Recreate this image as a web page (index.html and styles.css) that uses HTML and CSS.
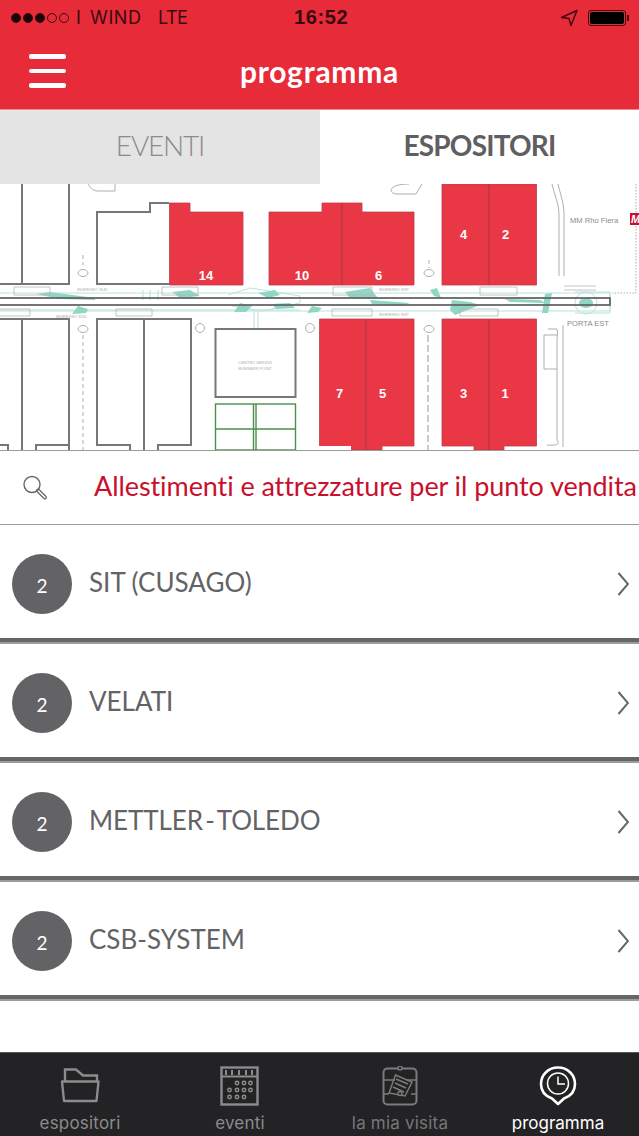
FILE: index.html
```html
<!doctype html>
<html>
<head>
  <meta charset="utf-8">
  <title>programma</title>
  <link rel="stylesheet" href="styles.css">
</head>
<body>
  <header class="top">
    <div class="status">
      <div class="signal">
        <span class="dot on"></span><span class="dot on"></span><span class="dot on"></span><span class="dot"></span><span class="dot"></span>
      </div>
      <span class="carrier">I WIND</span>
      <span class="net">LTE</span>
      <span class="time">16:52</span>
      <svg class="arrow" width="18" height="18" viewBox="0 0 18 18"><path d="M17 1.5 1.5 8.5 9 9.5 11 16.5Z" fill="none" stroke="#3a0a10" stroke-width="1.4" stroke-linejoin="round"/></svg>
      <div class="battery"><div class="battery-fill"></div></div>
      <div class="battery-tip"></div>
    </div>
    <div class="nav">
      <div class="burger"><span></span><span></span><span></span></div>
      <h1 class="title">programma</h1>
    </div>
  </header>

  <div class="tabs">
    <div class="tab">EVENTI</div>
    <div class="tab active">ESPOSITORI</div>
  </div>

  <svg class="map" width="639" height="266" viewBox="0 184 639 266">
    <!-- teal paths along the road -->
    <g fill="none" stroke="#b9e3d9" stroke-width="1">
      <path d="M0 293H610V311H0"/>
      <path d="M0 310H300"/>
      <path d="M143 290V300M150 290V300M158 290V300M228 295 250 288 300 296 300 303 262 311 232 306"/>
      <path d="M575 292H610V313H575"/>
      <path d="M254 311V328M258 311V328"/>
    </g>
    <g fill="#8fd6c5">
      <path d="M36 294 50 292 95 298 95 300 60 299Z"/>
      <path d="M72 314 78 306 88 309 86 313Z"/>
      <path d="M172 292 190 290 200 296 180 298Z"/>
      <path d="M258 293 275 290 280 295 268 298Z"/>
      <path d="M272 304 290 303 295 308 276 309Z"/>
      <path d="M234 312 240 303 252 306 246 312Z"/>
      <path d="M307 313 312 306 322 308 318 312Z"/>
      <path d="M345 292 370 288 378 298 350 298Z"/>
      <path d="M370 300 410 303 400 306 372 304Z"/>
      <path d="M430 290 437 288 441 298 434 296Z"/>
      <path d="M452 300 470 302 480 305 455 315 450 310Z"/>
      <path d="M505 299 540 300 546 303 510 302Z"/>
      <path d="M545 294 552 293 548 313 542 313Z"/>
      <ellipse cx="586" cy="303" rx="7" ry="5"/>
    </g>
    <circle cx="586" cy="303" r="11" fill="none" stroke="#b9e3d9"/>

    <!-- road -->
    <rect x="-4" y="298" width="614" height="7" fill="none" stroke="#666" stroke-width="1.8"/>

    <!-- entrances -->
    <g fill="none" stroke="#b5b5b5" stroke-width="0.8">
      <path d="M14 287H50V295H14ZM162 287H198V295H162ZM333 287H372V295H333ZM480 287H517V295H480Z"/>
      <path d="M-4 309H30V316H-4ZM116 309H152V316H116ZM332 309H372V316H332ZM460 309H498V316H460Z"/>
      <path d="M564 286H596M564 290H596"/>
    </g>

    <!-- grey halls -->
    <g fill="#fff" stroke="#777" stroke-width="2">
      <path d="M-2 284H69V184M22 184V284"/>
      <path d="M169 284H97V212H150V203H169"/>
      <path d="M-2 319H69V450M22 319V450M-2 445H8V450M36 450V445H69"/>
      <path d="M130 450V445H97V319H191V445H158V450M144 319V450"/>
      <rect x="215.500" y="329" width="80" height="68"/>
    </g>
    <g fill="none" stroke="#4b8f4b" stroke-width="1.400">
      <rect x="215.500" y="404" width="80" height="46"/>
      <path d="M253.500 404V450M256 404V450M215.500 429H295.500"/>
    </g>

    <!-- red halls -->
    <g fill="#ea3745" stroke="#b8404b" stroke-width="0.800">
      <path d="M169.500 285V203H190V212H243V285Z"/>
      <path d="M269 285V212H322V203H362V212H414V285Z"/>
      <rect x="442" y="184" width="94.500" height="101"/>
      <path d="M319.500 450V319H414V446H382V450Z" />
      <path d="M442 446V319H536.500V446H504V450H474V446Z"/>
    </g>
    <path d="M319 446H351V450.500H319Z" fill="#fff"/>
    <path d="M342 203V285M489 184V285M366 319V450M489 319V450" stroke="#a63a45" fill="none"/>

    <g class="hall-nums" text-anchor="middle">
      <text x="206" y="280">14</text>
      <text x="302" y="280">10</text>
      <text x="378.500" y="280">6</text>
      <text x="463.500" y="239">4</text>
      <text x="505.500" y="239">2</text>
      <text x="339.500" y="398">7</text>
      <text x="382.500" y="398">5</text>
      <text x="463.500" y="398">3</text>
      <text x="505" y="398">1</text>
    </g>

    <!-- other bits of the plan -->
    <g fill="none" stroke="#a5a5a5" stroke-width="0.900">
      <path d="M409 184C388 184 388 193 396 194H416L422 184"/>
      <path d="M88 184C91 189 94 191 98 191H115V184"/>
      <path d="M552 184C556 200 559 205 559 215V276M558 184C562 200 564 205 564 215V276"/>
      <path d="M636 184V293H612" stroke-dasharray="1.500 1.500"/>
      <path d="M548 329H557M557 329C558 334 557 336 557 340V440C560 444 557 446 547 445M557 335H544V369H557M563 325V447"/>
      <path d="M429 260V268M83 255V265M83 335V450" stroke-dasharray="4 3"/>
      <path d="M428 335V450" stroke-dasharray="7 3" stroke="#888"/>
      <ellipse cx="429" cy="273" rx="5" ry="3.500"/>
      <ellipse cx="83" cy="273" rx="5" ry="3.500"/>
      <ellipse cx="83" cy="329" rx="5" ry="3.500"/>
      <ellipse cx="429" cy="329" rx="5" ry="3.500"/>
      <circle cx="200" cy="328" r="4.500"/>
      <circle cx="310" cy="328" r="4.500"/>
    </g>
    <g class="map-small">
      <text x="570" y="223" class="map-label">MM Rho Fiera</text>
      <text x="567" y="326" class="map-label">PORTA EST</text>
      <text x="255" y="364" class="map-tiny" text-anchor="middle">CENTRO SERVIZI</text>
      <text x="255" y="370" class="map-tiny" text-anchor="middle">BUSINESS POINT</text>
      <text x="77" y="291" class="map-tiny">INGRESSO SUD</text>
      <text x="56" y="318" class="map-tiny">INGRESSO SUD</text>
      <text x="379" y="291" class="map-tiny">INGRESSO EST</text>
      <text x="379" y="316" class="map-tiny">INGRESSO EST</text>
    </g>
    <rect x="630" y="213" width="12" height="12" fill="#c8102e"/>
    <text x="631" y="223" class="map-m">M</text>
  </svg>

  <div class="search">
    <svg class="search-icon" width="28" height="28" viewBox="0 0 28 28">
      <circle cx="11" cy="10.500" r="8" fill="none" stroke="#666" stroke-width="1.400"/>
      <path d="M17 16.500 24 23.500" stroke="#666" stroke-width="4" stroke-linecap="round"/>
      <path d="M17.500 17 24 23.500" stroke="#fff" stroke-width="1.500" stroke-linecap="round"/>
    </svg>
    <span class="search-text">Allestimenti e attrezzature per il punto vendita</span>
  </div>

  <div class="list">
    <div class="row">
      <span class="badge">2</span>
      <span class="name">SIT (CUSAGO)</span>
      <svg class="chevron" width="14" height="26" viewBox="0 0 14 26"><path d="M3.500 2 13 13 3.500 24" fill="none" stroke="#666" stroke-width="2"/></svg>
    </div>
    <div class="row">
      <span class="badge">2</span>
      <span class="name">VELATI</span>
      <svg class="chevron" width="14" height="26" viewBox="0 0 14 26"><path d="M3.500 2 13 13 3.500 24" fill="none" stroke="#666" stroke-width="2"/></svg>
    </div>
    <div class="row">
      <span class="badge">2</span>
      <span class="name tight">METTLER - TOLEDO</span>
      <svg class="chevron" width="14" height="26" viewBox="0 0 14 26"><path d="M3.500 2 13 13 3.500 24" fill="none" stroke="#666" stroke-width="2"/></svg>
    </div>
    <div class="row">
      <span class="badge">2</span>
      <span class="name">CSB-SYSTEM</span>
      <svg class="chevron" width="14" height="26" viewBox="0 0 14 26"><path d="M3.500 2 13 13 3.500 24" fill="none" stroke="#666" stroke-width="2"/></svg>
    </div>
  </div>

  <footer class="bottom">
    <div class="item">
      <svg width="40" height="40" viewBox="0 0 40 40">
        <path d="M5 15V3.500H16L23 9.500H37V15" fill="none" stroke="#8c8c8c" stroke-width="2.400"/>
        <path d="M2 15.500H38.500L36.500 35H4Z" fill="none" stroke="#8c8c8c" stroke-width="2.400" stroke-linejoin="round"/>
      </svg>
      <span>espositori</span>
    </div>
    <div class="item">
      <svg width="40" height="40" viewBox="0 0 40 40">
        <rect x="1.500" y="1.500" width="36" height="37" fill="none" stroke="#8c8c8c" stroke-width="2.400"/>
        <path d="M1.500 10.500H37.500" stroke="#8c8c8c" stroke-width="2"/>
        <path d="M6 4V9M12 4V9M19 4V9M26 4V9M32 4V9" stroke="#8c8c8c" stroke-width="2"/>
        <g fill="none" stroke="#8c8c8c" stroke-width="1.500">
          <circle cx="17" cy="17" r="1.700"/><circle cx="24" cy="17" r="1.700"/><circle cx="30.500" cy="17" r="1.700"/>
          <circle cx="9.500" cy="24" r="1.700"/><circle cx="17" cy="24" r="1.700"/><circle cx="24" cy="24" r="1.700"/><circle cx="30.500" cy="24" r="1.700"/>
          <circle cx="9.500" cy="31" r="1.700"/><circle cx="17" cy="31" r="1.700"/><circle cx="24" cy="31" r="1.700"/>
        </g>
      </svg>
      <span>eventi</span>
    </div>
    <div class="item dim">
      <svg width="40" height="40" viewBox="0 0 40 40">
        <rect x="3.500" y="2.500" width="33" height="36" rx="4" fill="none" stroke="#7c7c7c" stroke-width="2"/>
        <circle cx="20" cy="2" r="2" fill="#232224" stroke="#7c7c7c" stroke-width="1.400"/>
        <path d="M3.500 14H15M26 14H36.500M3.500 28H9M31 28H36.500" stroke="#7c7c7c" stroke-width="1.400"/>
        <path d="M15.500 9 32 16 25 30 9 27Z" fill="none" stroke="#7c7c7c" stroke-width="1.400"/>
        <path d="M16 13 28 18M15 17 26 22M13 21 24 26" stroke="#7c7c7c" stroke-width="1.600"/>
        <circle cx="20" cy="27.500" r="2" fill="#232224" stroke="#7c7c7c" stroke-width="1.400"/>
      </svg>
      <span>la mia visita</span>
    </div>
    <div class="item current">
      <svg width="40" height="40" viewBox="0 0 40 40">
        <path d="M20 38 14 32.500C7 30 3 24.500 3 18 3 8.500 10.500 1.500 20 1.500S37 8.500 37 18C37 24.500 33 30 26 32.500Z" fill="none" stroke="#fff" stroke-width="2.600" stroke-linejoin="round"/>
        <circle cx="20" cy="17.500" r="10.500" fill="none" stroke="#fff" stroke-width="1.500"/>
        <path d="M20 10.500V18H27" fill="none" stroke="#fff" stroke-width="1.500"/>
      </svg>
      <span>programma</span>
    </div>
  </footer>
</body>
</html>
```

FILE: styles.css
```css
html, body {
  margin: 0;
  padding: 0;
}
body {
  width: 639px;
  height: 1136px;
  overflow: hidden;
  background-color: #ffffff;
  display: flex;
  flex-direction: column;
  font-family: Lato, "Noto Sans", sans-serif;
}

/* red header */
.top {
  height: 109px;
  background-color: #e72b39;
}
.status {
  height: 35px;
  display: flex;
  align-items: center;
  color: #3a0a10;
  font-family: Inter, "Liberation Sans", sans-serif;
  font-size: 18px;
  padding-left: 11px;
}
.signal {
  display: flex;
  gap: 2px;
  width: 65px;
}
.dot {
  width: 8px;
  height: 8px;
  border: 1px solid #3a0a10;
  border-radius: 50%;
}
.dot.on {
  background-color: #1a0508;
}
.carrier {
  width: 82px;
  letter-spacing: 0.6px;
  word-spacing: 3px;
}
.net {
  width: 136px;
  letter-spacing: -0.5px;
}
.time {
  width: 75px;
  font-family: "Liberation Sans", sans-serif;
  font-weight: bold;
  font-size: 20px;
  letter-spacing: 0.6px;
  margin-right: 191px;
}
.arrow {
  margin-right: 10px;
}
.battery {
  width: 34px;
  height: 12px;
  padding: 1px;
  border: 1px solid #3a0a10;
  border-radius: 3px;
}
.battery-fill {
  height: 100%;
  background-color: #000000;
  border-radius: 2px;
}
.battery-tip {
  width: 2px;
  height: 6px;
  background-color: #3a0a10;
  margin-left: 1px;
}
.nav {
  height: 74px;
  display: flex;
  align-items: center;
  justify-content: center;
  position: relative;
}
.burger {
  position: absolute;
  left: 29px;
  top: 19px;
  display: flex;
  flex-direction: column;
  gap: 10px;
}
.burger span {
  display: block;
  width: 37px;
  height: 4.5px;
  background-color: #ffffff;
  border-radius: 2px;
}
.title {
  margin: 0 0 2px 0;
  color: #ffffff;
  font-size: 30px;
  font-weight: 700;
  letter-spacing: 0.75px;
}

/* tabs */
.tabs {
  display: flex;
  height: 74px;
  border-top: 1px solid #ee8f95;
  font-size: 28px;
}
.tab {
  width: 320px;
  display: flex;
  align-items: center;
  justify-content: center;
  padding-bottom: 5px;
  box-sizing: border-box;
  background-color: #e4e4e4;
  color: #8b8b8b;
  font-weight: 300;
  letter-spacing: -1.2px;
}
.tab.active {
  width: 319px;
  background-color: #ffffff;
  color: #5f5f62;
  font-weight: 700;
  letter-spacing: -0.8px;
}

/* map */
.map {
  display: block;
  flex: none;
}
.hall-nums text {
  fill: #ffffff;
  font-family: "Liberation Sans", sans-serif;
  font-weight: bold;
  font-size: 13px;
}
.map-label {
  fill: #8a8a8a;
  font-family: "Liberation Sans", sans-serif;
  font-size: 7.6px;
}
.map-tiny {
  fill: #aaaaaa;
  font-family: "Liberation Sans", sans-serif;
  font-size: 4px;
}
.map-m {
  fill: #ffffff;
  font-family: "Liberation Sans", sans-serif;
  font-weight: bold;
  font-style: italic;
  font-size: 11px;
}

/* search */
.search {
  height: 73px;
  box-sizing: content-box;
  display: flex;
  align-items: center;
  border-top: 1px solid #9a9a9a;
  border-bottom: 1px solid #9a9a9a;
  padding-left: 21px;
  white-space: nowrap;
  overflow: hidden;
}
.search-icon {
  flex: none;
  margin-right: 45px;
}
.search-text {
  color: #c8102e;
  font-size: 27px;
  letter-spacing: -0.08px;
  padding-bottom: 4px;
}

/* list */
.list {
  display: flex;
  flex-direction: column;
  gap: 2px;
  flex: 1;
}
.row {
  height: 109px;
  display: flex;
  align-items: center;
  border-bottom: 4px solid #666669;
  box-shadow: 0 2px 0 #9c9c9c;
  padding: 4px 10px 0 12px;
}
.badge {
  flex: none;
  width: 60px;
  height: 57px;
  padding-top: 3px;
  border-radius: 50%;
  background-color: #636366;
  color: #ffffff;
  font-size: 19px;
  display: flex;
  align-items: center;
  justify-content: center;
  margin-right: 17px;
}
.name {
  flex: 1;
  color: #636366;
  font-size: 26px;
  padding-bottom: 3px;
}
.name.tight {
  word-spacing: -4px;
  letter-spacing: -0.1px;
}

/* bottom tab bar */
.bottom {
  height: 83px;
  flex: none;
  display: flex;
  background-color: #232224;
  border-top: 1px solid #58585a;
}
.item {
  width: 160px;
  display: flex;
  flex-direction: column;
  align-items: center;
  padding-top: 13px;
  color: #8c8c8c;
  font-family: Inter, "Liberation Sans", sans-serif;
  font-size: 17px;
  letter-spacing: 0.2px;
}
.item svg {
  display: block;
  margin-bottom: 7px;
}
.item.dim {
  color: #77777a;
}
.item.current {
  color: #ffffff;
  letter-spacing: 0;
  margin-left: -2px;
}
```
